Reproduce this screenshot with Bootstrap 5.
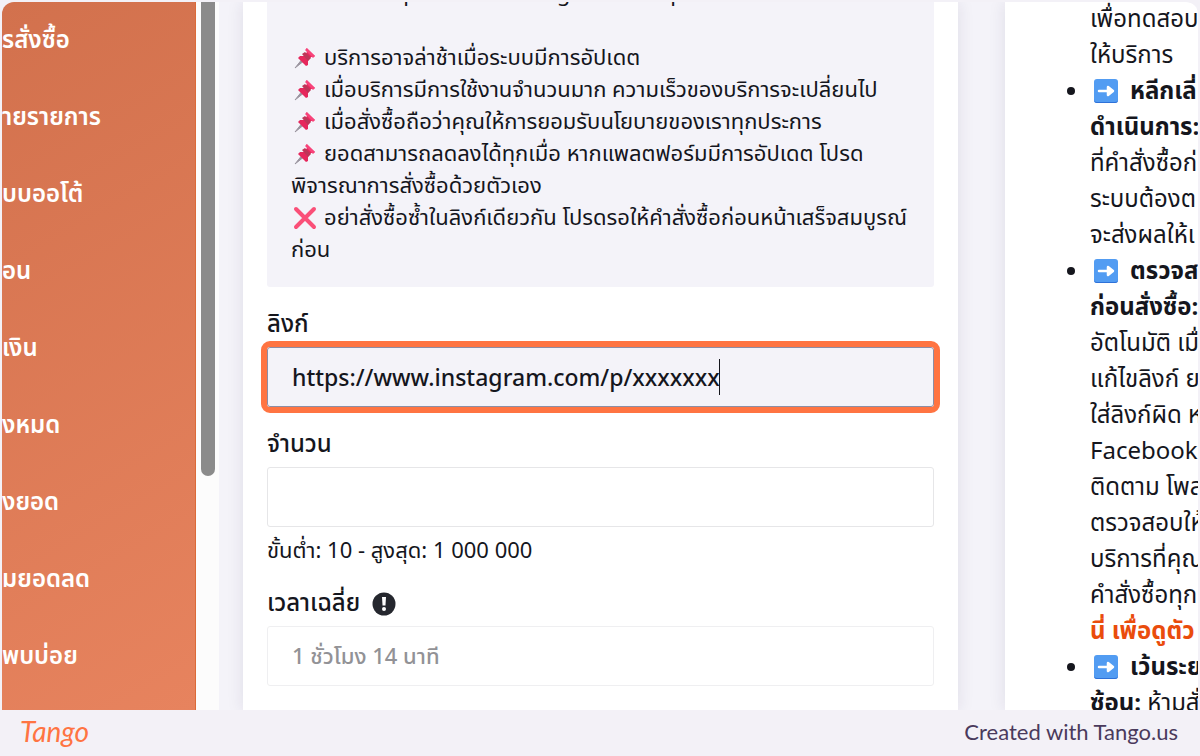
<!DOCTYPE html>
<html lang="th">
<head>
<meta charset="utf-8">
<meta name="viewport" content="width=device-width, initial-scale=1">
<title>สั่งซื้อบริการ</title>
<link href="https://cdn.jsdelivr.net/npm/bootstrap@5.3.0/dist/css/bootstrap.min.css" rel="stylesheet">
<style>
  body { background: #f3f1f7; color: #15161d; font-family: "Noto Sans Thai", "Noto Sans", sans-serif; }
  .viewport { margin: 2px 2px 0; border-radius: 12px 12px 0 0; background: #f4f3f9; min-height: 0; }
  .side { width: 194px; padding-bottom: 14px; background: linear-gradient(150deg, #d2714d, #e7835e); border-right: 1px solid #dc6a38; }
  .side-link { color: #fff; font-size: 24px; font-weight: 600; line-height: 36px; text-decoration: none; white-space: nowrap; }
  .track { width: 23px; background: #fcfcfc; padding-left: 5px; }
  .thumb { width: 14px; height: 67%; background: #8b8b8b; border-radius: 0 0 7px 7px; }
  .panels { gap: 47px; }
  .order { padding: 0 24px; box-shadow: 0 0 16px rgba(40, 30, 70, .1); }
  .info { margin-top: -23px; padding: 0 24px 20px; background: #f4f3f9; border-radius: 3px; font-size: 22px; line-height: 32px; white-space: nowrap; }
  .emo { width: 24px; height: 24px; margin: 0 7px 0 2px; vertical-align: -5px; }
  .lbl { font-size: 24px; font-weight: 500; line-height: 36px; }
  .avg { gap: 12px; }
  .field { height: 60px; padding: 3px 24px 0; border: 1px solid #e6e6e8; border-radius: 3px; font-size: 22px; font-weight: 500; color: #15161d; }
  .field:disabled { background: #fff; color: #929296; border-color: #efeff1; }
  .field.active { background: #f4f3f9; border-color: #8c8da5; outline: 6px solid #ff7442; font-size: 23px; }
  .caret { left: 452px; top: 12px; width: 1px; height: 36px; background: #15161d; }
  .help { font-size: 22px; line-height: 36px; padding-top: 3px; }
  .tips { width: 193px; padding-left: 85px; box-shadow: 0 0 16px rgba(40, 30, 70, .1); font-size: 24px; line-height: 36px; white-space: nowrap; }
  .tips ul { padding: 0; }
  .tips b { font-size: 24px; }
  .tips .emo { width: 26px; height: 26px; margin: 0 11px 0 3px; }
  .hot { color: #ea4c0c; }
  .foot { height: 46px; padding: 0 22px 4px 20px; color: #4a3a5c; font-family: Lato, sans-serif; font-size: 22px; }
  .logo { color: #ff7442; font-size: 28px; font-weight: 400; }
</style>
</head>
<body>
<svg class="d-none" aria-hidden="true">
  <symbol id="pin" viewBox="0 0 24 24"><path d="M2 22 10 12l2 2z" fill="#9a949f" stroke="#9a949f"/><path d="M13 2l9 8-2 1-2 0-3 4 0 4-2 1-8-8 2-2 4 0 3-4z" fill="#e6275c"/><path d="M12 4l2-2 8 8-2 2z" fill="#f8427a"/><path d="M9 8l3-2 6 6-3 3z" fill="#bd3558"/></symbol>
  <symbol id="cross" viewBox="0 0 24 24"><path d="M3 3l18 18M21 3 3 21" stroke="#fa4f78" stroke-width="4" stroke-linecap="round"/></symbol>
  <symbol id="arrow" viewBox="0 0 26 26"><rect x="1" y="1" width="24" height="24" rx="3" fill="#529cf2"/><path d="M1 21v1a3 3 0 0 0 3 3h18a3 3 0 0 0 3-3v-1a3 3 0 0 1-3 3H4a3 3 0 0 1-3-3z" fill="#2e71d8"/><path d="M6 13h10M15 9l5 4-5 4z" fill="#fff" stroke="#fff" stroke-width="2.500" stroke-linejoin="round" stroke-linecap="round"/></symbol>
</svg>
<div class="vh-100 d-flex flex-column overflow-hidden">
  <div class="viewport d-flex flex-fill overflow-hidden">
    <nav class="side d-flex flex-column flex-shrink-0 overflow-hidden">
      <a class="side-link d-flex flex-fill align-items-center" href="#">รสั่งซื้อ</a>
      <a class="side-link d-flex flex-fill align-items-center" href="#">ายรายการ</a>
      <a class="side-link d-flex flex-fill align-items-center" href="#">บบออโต้</a>
      <a class="side-link d-flex flex-fill align-items-center" href="#">อน</a>
      <a class="side-link d-flex flex-fill align-items-center" href="#">เงิน</a>
      <a class="side-link d-flex flex-fill align-items-center" href="#">งหมด</a>
      <a class="side-link d-flex flex-fill align-items-center" href="#">งยอด</a>
      <a class="side-link d-flex flex-fill align-items-center" href="#">มยอดลด</a>
      <a class="side-link d-flex flex-fill align-items-center" href="#">พบบ่อย</a>
    </nav>
    <div class="track flex-shrink-0"><div class="thumb"></div></div>
    <main class="panels d-flex flex-fill ps-4">
      <form class="order bg-white flex-fill">
        <div class="info">
          ตัวอย่าง: https://www.instagram.com/p/xxxxxxx.<br><br>
          <svg class="emo"><use href="#pin"/></svg>บริการอาจล่าช้าเมื่อระบบมีการอัปเดต<br>
          <svg class="emo"><use href="#pin"/></svg>เมื่อบริการมีการใช้งานจำนวนมาก ความเร็วของบริการจะเปลี่ยนไป<br>
          <svg class="emo"><use href="#pin"/></svg>เมื่อสั่งซื้อถือว่าคุณให้การยอมรับนโยบายของเราทุกประการ<br>
          <svg class="emo"><use href="#pin"/></svg>ยอดสามารถลดลงได้ทุกเมื่อ หากแพลตฟอร์มมีการอัปเดต โปรด<br>
          พิจารณาการสั่งซื้อด้วยตัวเอง<br>
          <svg class="emo"><use href="#cross"/></svg>อย่าสั่งซื้อซ้ำในลิงก์เดียวกัน โปรดรอให้คำสั่งซื้อก่อนหน้าเสร็จสมบูรณ์<br>
          ก่อน
        </div>
        <label class="lbl d-block mt-3 pt-1" for="link">ลิงก์</label>
        <div class="position-relative mt-1">
          <input class="field active w-100 d-block" id="link" type="text" value="https://www.instagram.com/p/xxxxxxx">
          <span class="caret position-absolute"></span>
        </div>
        <label class="lbl d-block mt-3 pt-1" for="qty">จำนวน</label>
        <input class="field w-100 d-block mt-1" id="qty" type="text">
        <div class="help mt-1">ขั้นต่ำ: 10 - สูงสุด: 1 000 000</div>
        <label class="lbl avg d-flex align-items-center mt-3" for="avg">เวลาเฉลี่ย
          <svg width="24" height="24" viewBox="0 0 24 24"><circle cx="12" cy="12" r="11.500" fill="#25272e"/><path d="M10 5h4l-.5 8.500h-3z" fill="#fff"/><circle cx="12" cy="17" r="2" fill="#fff"/></svg>
        </label>
        <input class="field w-100 d-block mt-1" id="avg" type="text" value="1 ชั่วโมง 14 นาที" disabled>
      </form>
      <aside class="tips bg-white flex-shrink-0 overflow-hidden">
        <div>เพื่อทดสอบ<br>ให้บริการ</div>
        <ul>
          <li><svg class="emo"><use href="#arrow"/></svg><b>หลีกเลี่<br>ดำเนินการ:</b><br>ที่คำสั่งซื้อก่<br>ระบบต้องต<br>จะส่งผลให้เ</li>
          <li><svg class="emo"><use href="#arrow"/></svg><b>ตรวจส<br>ก่อนสั่งซื้อ:</b><br>อัตโนมัติ เมื่<br>แก้ไขลิงก์ ย<br>ใส่ลิงก์ผิด ห<br>Facebook<br>ติดตาม โพส<br>ตรวจสอบให้<br>บริการที่คุณ<br>คำสั่งซื้อทุก<br><b class="hot">นี่ เพื่อดูตัว</b></li>
          <li><svg class="emo"><use href="#arrow"/></svg><b>เว้นระย<br>ซ้อน:</b> ห้ามสั่</li>
        </ul>
      </aside>
    </main>
  </div>
  <footer class="foot d-flex flex-shrink-0 align-items-center justify-content-between">
    <span class="logo fst-italic">Tango</span><span>Created with Tango.us</span>
  </footer>
</div>
<script src="https://cdn.jsdelivr.net/npm/bootstrap@5.3.0/dist/js/bootstrap.bundle.min.js"></script>
</body>
</html>
